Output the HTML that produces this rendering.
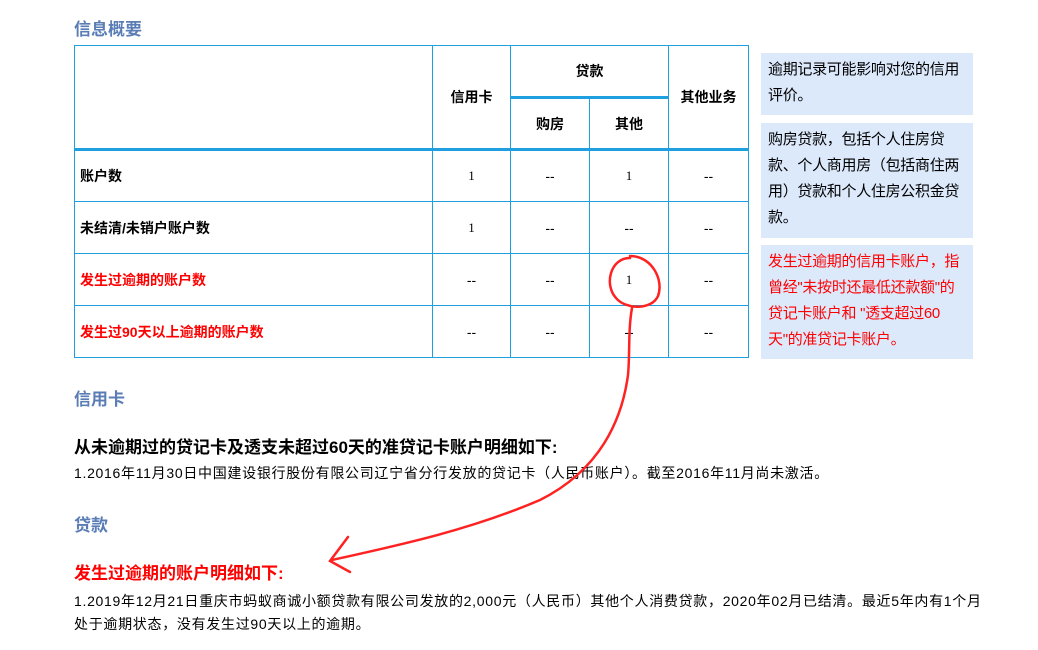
<!DOCTYPE html>
<html><head><meta charset="utf-8"><style>
body{margin:0;width:1038px;height:650px;background:#fff;font-family:"Liberation Sans","Noto Sans CJK SC",sans-serif;position:relative;overflow:hidden;color:#000}
.h{position:absolute;left:74px;font-size:17px;font-weight:bold;color:#5a7db5}
table{position:absolute;left:74px;top:45px;border-collapse:collapse;font-size:14px}
td{border:1px solid #1ea0e0;text-align:center;padding:0}
.l{text-align:left;padding-left:5px}
.r{color:#f00}
.n{font-family:"Liberation Serif",serif;font-size:13px}
.box{position:absolute;left:761px;width:198px;background:#dce9fb;font-size:15px;line-height:26px;padding:4px 7px;box-sizing:content-box;letter-spacing:-0.3px}
.t{position:absolute;left:74px;font-size:14px;letter-spacing:0.7px}
</style></head><body>
<div class="h" style="top:15px">信息概要</div>
<table>
<tr style="height:52px"><td rowspan="2" style="width:357px;border-bottom:3px solid #1ea0e0"></td><td rowspan="2" style="width:77px;border-bottom:3px solid #1ea0e0"><b>信用卡</b></td><td colspan="2" style="border-bottom:3px solid #1ea0e0"><b>贷款</b></td><td rowspan="2" style="width:79px;border-bottom:3px solid #1ea0e0"><b>其他业务</b></td></tr>
<tr style="height:52px"><td style="width:78px;border-bottom:3px solid #1ea0e0"><b>购房</b></td><td style="width:78px;border-bottom:3px solid #1ea0e0"><b>其他</b></td></tr>
<tr style="height:52px"><td class="l"><b>账户数</b></td><td class="n">1</td><td>--</td><td class="n">1</td><td>--</td></tr>
<tr style="height:52px"><td class="l"><b>未结清/未销户账户数</b></td><td class="n">1</td><td>--</td><td>--</td><td>--</td></tr>
<tr style="height:52px"><td class="l r"><b>发生过逾期的账户数</b></td><td>--</td><td>--</td><td class="n">1</td><td>--</td></tr>
<tr style="height:52px"><td class="l r"><b>发生过90天以上逾期的账户数</b></td><td>--</td><td>--</td><td>--</td><td>--</td></tr>
</table>
<div class="box" style="top:53px;height:54px">逾期记录可能影响对您的信用评价。</div>
<div class="box" style="top:123px;height:107px">购房贷款，包括个人住房贷款、个人商用房（包括商住两用）贷款和个人住房公积金贷款。</div>
<div class="box r" style="top:245px;height:106px;color:#f00">发生过逾期的信用卡账户，指曾经"未按时还最低还款额"的贷记卡账户和 "透支超过60天"的准贷记卡账户。</div>
<div class="h" style="top:385px">信用卡</div>
<div style="position:absolute;left:74px;top:433px;font-size:17px;font-weight:bold">从未逾期过的贷记卡及透支未超过60天的准贷记卡账户明细如下:</div>
<div class="t" style="top:463px">1.2016年11月30日中国建设银行股份有限公司辽宁省分行发放的贷记卡（人民币账户）。截至2016年11月尚未激活。</div>
<div class="h" style="top:511px">贷款</div>
<div style="position:absolute;left:74px;top:559px;font-size:17px;font-weight:bold;color:#f00">发生过逾期的账户明细如下:</div>
<div class="t" style="top:590px;width:915px;line-height:23px">1.2019年12月21日重庆市蚂蚁商诚小额贷款有限公司发放的2,000元（人民币）其他个人消费贷款，2020年02月已结清。最近5年内有1个月处于逾期状态，没有发生过90天以上的逾期。</div>
<svg width="1038" height="650" style="position:absolute;left:0;top:0" fill="none" stroke="#f22" stroke-width="2.5" stroke-linecap="round">
<path d="M630 258 C610 258 604 285 616 298 C626 310 652 310 658 296 C664 280 652 256 630 256"/>
<path d="M632 308 C628 330 630 355 628 375 C622 420 600 470 540 500 C470 530 400 545 332 560"/>
<path d="M348 537 L330 561 L350 572"/>
</svg>
</body></html>
